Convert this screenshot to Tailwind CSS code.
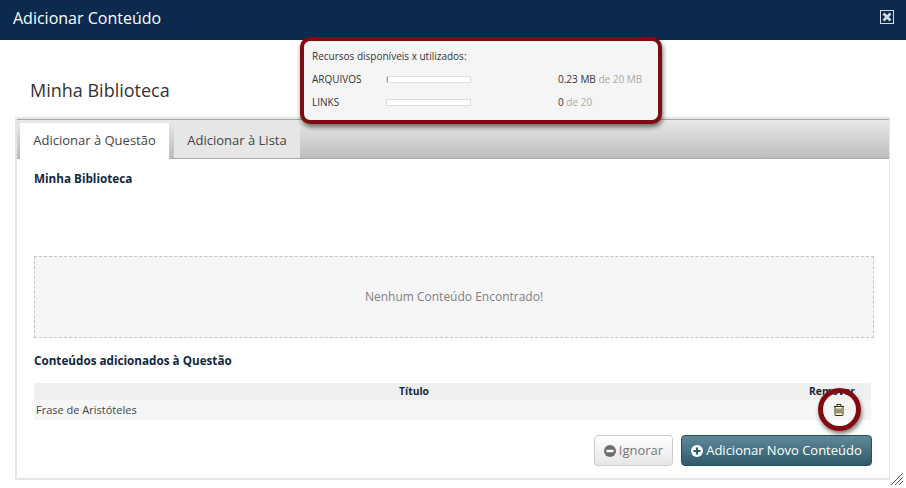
<!DOCTYPE html>
<html>
  <head>
    <meta charset="UTF-8" />
    <title>Adicionar Conteúdo</title>
    <script src="https://cdn.jsdelivr.net/npm/@tailwindcss/browser@4"></script>
  </head>
  <body class="bg-white font-['Open_Sans',sans-serif] text-[#333] overflow-hidden">
    <div class="relative w-[906px] h-[488px] overflow-hidden">
      <!-- title bar -->
      <header class="h-10 bg-[#0b2a4d] flex items-center justify-between pl-[13px] pr-[12px] pb-[4px]">
        <h1 class="text-base text-white">Adicionar Conteúdo</h1>
        <svg width="14" height="14" viewBox="0 0 14 14" class="-mt-[2px] text-[#d5dbe2]">
          <rect x="0.5" y="0.5" width="13" height="13" fill="none" stroke="currentColor" />
          <path d="M3.5 3.5l7 7M10.5 3.5l-7 7" stroke="currentColor" stroke-width="2.6" />
        </svg>
      </header>

      <h2 class="mt-[37px] ml-[30px] text-lg leading-[26px] text-[#333]">Minha Biblioteca</h2>

      <!-- tabs panel -->
      <section class="mt-[14px] ml-[15px] w-[875px] h-[363px] border-2 border-[#e6e6e6] border-r-[1px] border-b-[2px] flex flex-col">
        <div class="h-10 shrink-0 border-t border-b border-[#a8a8a8] bg-gradient-to-b from-[#e9e9e9] to-[#bdbdbd] flex items-end pl-[3px] gap-[5px]">
          <div class="w-[149px] h-[36px] -mb-px bg-white text-[13px] text-[#444] flex items-center justify-center">Adicionar à Questão</div>
          <div class="w-[126px] h-[36px] pt-[2px] bg-[#e6e6e6] text-[13px] text-[#444] flex items-center justify-center">Adicionar à Lista</div>
        </div>

        <div class="flex-1 pl-[17px] pr-[15px] flex flex-col">
          <h3 class="mt-[11px] text-[11.7px] leading-[17px] font-bold text-[#10283f]">Minha Biblioteca</h3>

          <div class="mt-[69px] h-[82px] border border-dashed border-[#c4c4c4] bg-[#f6f6f6] flex items-center justify-center text-xs text-[#808080]">
            Nenhum Conteúdo Encontrado!
          </div>

          <h3 class="mt-[14px] text-[11.7px] leading-[17px] font-bold text-[#10283f]">Conteúdos adicionados à Questão</h3>

          <table class="mt-[14px] w-[837px] text-[11px] border-collapse">
            <thead>
              <tr class="h-[17px] bg-[#efefef] text-[10.3px] text-[#10283f]">
                <th class="text-center font-bold p-0 pr-[13px]">Título</th>
                <th class="w-[64px] text-left font-bold p-0 pl-[2px]">Remover</th>
              </tr>
            </thead>
            <tbody>
              <tr class="h-[20px] bg-[#f6f6f6] text-[#444]">
                <td class="pl-[2px] p-0">Frase de Aristóteles</td>
                <td class="p-0 pl-[27px] align-middle">
                  <svg width="10" height="12" viewBox="0 0 10 12" class="block text-[#2f2c08]">
                    <path d="M0 2.5h10M3 2.5V0.5h4v2M1 2.5v8.2a0.8 0.8 0 0 0 0.8 0.8h6.4a0.8 0.8 0 0 0 0.8-0.8V2.5" fill="#fffbe8" stroke="currentColor" />
                    <path d="M3 4.5v5M5 4.5v5M7 4.5v5" stroke="currentColor" fill="none" />
                  </svg>
                </td>
              </tr>
            </tbody>
          </table>

          <div class="mt-[15px] flex justify-end gap-2 pr-[2px]">
            <button class="w-[79px] h-[31px] rounded border border-[#ccc] bg-gradient-to-b from-white to-[#e6e6e6] text-[13px] text-[#777] flex items-center justify-center gap-[3px]">
              <svg width="12" height="12" viewBox="0 0 12 12"><circle cx="6" cy="6" r="6" fill="#6e6e6e" /><rect x="2.5" y="4.8" width="7" height="2.4" fill="#fff" /></svg>
              Ignorar
            </button>
            <button class="w-[191px] h-[31px] rounded border border-[#27505f] bg-gradient-to-b from-[#5f8a98] to-[#2f5a6b] text-[13px] text-white flex items-center justify-center gap-[3px]">
              <svg width="12" height="12" viewBox="0 0 12 12"><circle cx="6" cy="6" r="6" fill="#fff" /><path d="M2.5 6h7M6 2.5v7" stroke="#2f5a6b" stroke-width="2.2" /></svg>
              Adicionar Novo Conteúdo
            </button>
          </div>
        </div>
      </section>

      <!-- resize handle -->
      <svg width="14" height="14" viewBox="0 0 14 14" class="absolute right-[2px] bottom-[2px] text-[#555]">
        <path d="M1 13L13 1M5 13l8-8M9 13l4-4" stroke="currentColor" fill="none" />
      </svg>

      <!-- annotation: resources -->
      <div class="absolute left-[300px] top-[37px] w-[362px] h-[87px] rounded-[10px] border-[4px] border-[#800c12] bg-[#f5f5f5] shadow-[1px_3px_5px_rgba(0,0,0,0.55)] pt-[8px] pl-[8px] text-[10px] text-[#333]">
        <p class="leading-[15px]">Recursos disponíveis x utilizados:</p>
        <div class="mt-[8px] h-[15px] flex items-center">
          <span class="w-[74px]">ARQUIVOS</span>
          <div class="w-[85px] h-[7px] border border-[#ddd] bg-white"><div class="w-px h-full bg-[#999]"></div></div>
          <span class="ml-[87px]"><span class="text-[#333]">0.23 MB</span> <span class="text-[#aaa]">de 20 MB</span></span>
        </div>
        <div class="mt-[8px] h-[15px] flex items-center">
          <span class="w-[74px]">LINKS</span>
          <div class="w-[85px] h-[7px] border border-[#ddd] bg-white"></div>
          <span class="ml-[87px]"><span class="text-[#333]">0</span> <span class="text-[#aaa]">de 20</span></span>
        </div>
      </div>

      <!-- annotation: trash -->
      <div class="absolute left-[818px] top-[388px] w-[43px] h-[43px] rounded-full border-[5px] border-[#800c12] shadow-[1px_3px_4px_rgba(0,0,0,0.5)]"></div>
    </div>
  </body>
</html>
